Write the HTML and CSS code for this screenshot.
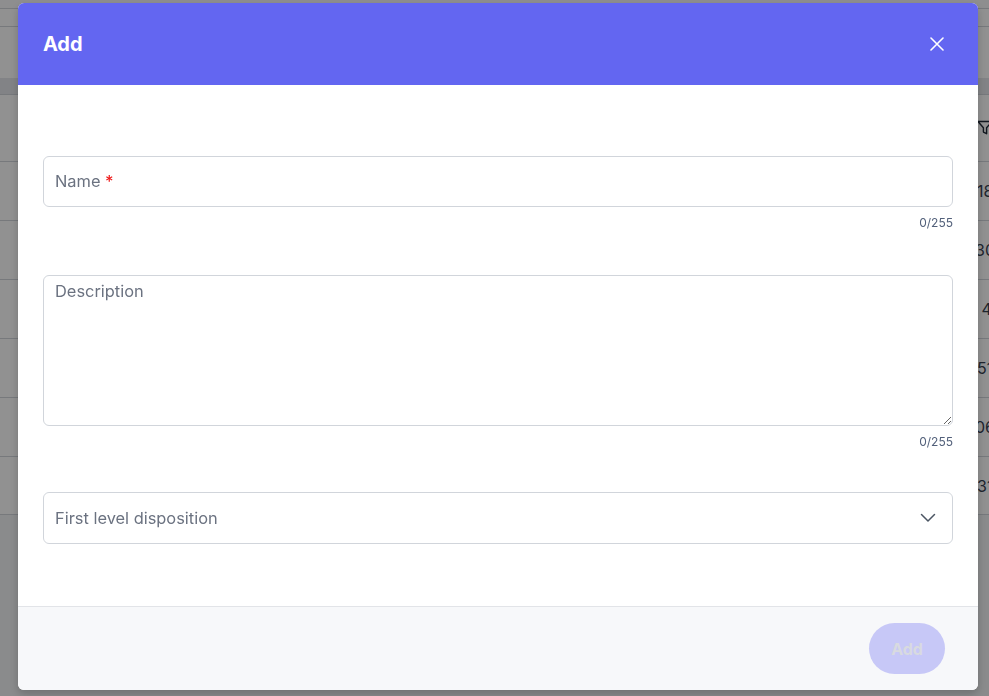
FILE: index.html
```html
<!DOCTYPE html>
<html lang="en">

<head>
    <meta charset="UTF-8">
    <meta name="viewport" content="width=device-width, initial-scale=1.0">
    <title>Add</title>

    <link rel="stylesheet" href="styles.css">
</head>

<body>
    <!-- page behind the dialog -->
    <div id="page">
        <div class="topbar"></div>
        <div class="toolbar"></div>
        <div class="spacer"></div>
        <div class="thead"></div>
        <div class="row filter-row">
            <span class="cell">
                <svg class="funnel" width="16" height="16" viewBox="0 0 16 16">
                    <path d="M1 1.5h14l-5.4 6.2v6l-3.2-1.6V7.7z" fill="none" stroke="#1f2937" stroke-width="1.4" stroke-linejoin="round"/>
                </svg>
            </span>
        </div>
        <div class="row"><span class="cell">18</span></div>
        <div class="row"><span class="cell shift">30</span></div>
        <div class="row"><span class="cell">&nbsp;4</span></div>
        <div class="row"><span class="cell">51</span></div>
        <div class="row"><span class="cell shift">06</span></div>
        <div class="row"><span class="cell">31</span></div>
    </div>

    <div id="overlay">
        <div id="modal">
            <div class="modal-head">
                <h2>Add</h2>
                <span class="close">
                    <svg width="14" height="14" viewBox="0 0 14 14">
                        <path d="M1 1l12 12M13 1L1 13" stroke="#ffffff" stroke-width="1.6" stroke-linecap="round"/>
                    </svg>
                </span>
            </div>

            <div class="modal-body">
                <div class="group">
                    <div class="field">
                        <input class="input" type="text">
                        <span class="label">Name <b>*</b></span>
                    </div>
                    <div class="count">0/255</div>
                </div>

                <div class="group last">
                    <textarea class="textarea" placeholder="Description"></textarea>
                    <div class="count">0/255</div>
                </div>

                <div class="select">
                    <span>First level disposition</span>
                    <svg width="16" height="10" viewBox="0 0 16 10">
                        <path d="M1.5 1.5l6.5 6.5 6.5-6.5" fill="none" stroke="#4b5563" stroke-width="1.5" stroke-linecap="round" stroke-linejoin="round"/>
                    </svg>
                </div>
            </div>

            <div class="modal-foot">
                <button class="btn" disabled>Add</button>
            </div>
        </div>
    </div>
</body>

</html>
```

FILE: styles.css
```css
* {
    margin: 0;
    padding: 0;
    box-sizing: border-box;
}

body {
    font-family: Inter, "Liberation Sans", sans-serif;
    background: #f2f4f6;
    width: 989px;
    height: 696px;
    overflow: hidden;
}

/* 背后的表格 */
#page {
    width: 989px;
}

.topbar {
    height: 9px;
    background: #f9fafb;
    border-bottom: 1px solid #d1d5db;
}

.toolbar {
    height: 18px;
    background: #ffffff;
    border-bottom: 1px solid #d1d5db;
}

.spacer {
    height: 51px;
    background: #ffffff;
}

.thead {
    height: 16px;
    background: #e5e7eb;
}

.row {
    height: 59px;
    background: #ffffff;
    border-top: 1px solid #d1d5db;
    display: flex;
    justify-content: flex-end;
    align-items: center;
}

.filter-row {
    height: 67px;
}

.row:last-child {
    border-bottom: 1px solid #d1d5db;
}

.cell {
    width: 12px;
    overflow: hidden;
    white-space: nowrap;
    font-size: 16px;
    color: #374151;
}

.cell.shift {
    width: 14px;
}

.funnel {
    display: block;
}

/* 遮罩 */
#overlay {
    position: fixed;
    left: 0;
    top: 0;
    width: 100%;
    height: 100%;
    background: rgba(0, 0, 0, 0.43);
    padding: 3px 0 0 18px;
}

#modal {
    width: 960px;
    height: 687px;
    background: #ffffff;
    border-radius: 6px;
    overflow: hidden;
    display: flex;
    flex-direction: column;
    box-shadow: 0 4px 10px rgba(0, 0, 0, 0.2);
}

.modal-head {
    height: 82px;
    background: #6366f1;
    display: flex;
    align-items: center;
    justify-content: space-between;
    padding: 0 30px 0 25px;
}

.modal-head h2 {
    color: #ffffff;
    font-size: 20px;
    font-weight: 700;
    letter-spacing: -0.1px;
}

.close {
    width: 22px;
    height: 22px;
    display: flex;
    align-items: center;
    justify-content: center;
}

.modal-body {
    flex: 1;
    padding: 71px 25px 0 25px;
}

.group {
    margin-bottom: 43px;
}

.group.last {
    margin-bottom: 41px;
}

.field {
    position: relative;
}

.input {
    display: block;
    width: 100%;
    height: 51px;
    border: 1px solid #d1d5db;
    border-radius: 6px;
    outline: none;
    font: inherit;
    font-size: 16.4px;
    padding: 0 11px;
}

.label {
    position: absolute;
    left: 12px;
    top: 0;
    line-height: 51px;
    font-size: 16.4px;
    color: #6b7280;
}

.label b {
    color: #ef1b1b;
    font-weight: 500;
}

.textarea {
    display: block;
    width: 100%;
    height: 151px;
    border: 1px solid #d1d5db;
    border-radius: 6px;
    outline: none;
    font-family: inherit;
    font-size: 16.4px;
    line-height: 24px;
    padding: 3px 11px;
    resize: vertical;
}

.textarea::placeholder {
    color: #6b7280;
}

.count {
    margin-top: 7px;
    text-align: right;
    font-size: 12px;
    line-height: 18px;
    color: #52607a;
}

.select {
    height: 52px;
    border: 1px solid #d1d5db;
    border-radius: 6px;
    display: flex;
    align-items: center;
    justify-content: space-between;
    padding: 0 16px 0 11px;
    font-size: 16.4px;
    color: #6b7280;
}

.select svg {
    display: block;
}

.modal-foot {
    height: 84px;
    background: #f7f8fa;
    border-top: 1px solid #e2e4e8;
    display: flex;
    justify-content: flex-end;
    padding: 16px 33px 0 0;
}

.btn {
    width: 76px;
    height: 51px;
    border: none;
    border-radius: 26px;
    background: #c7c8f7;
    color: #d8dae0;
    font-family: inherit;
    font-size: 16px;
    font-weight: 700;
}
```
